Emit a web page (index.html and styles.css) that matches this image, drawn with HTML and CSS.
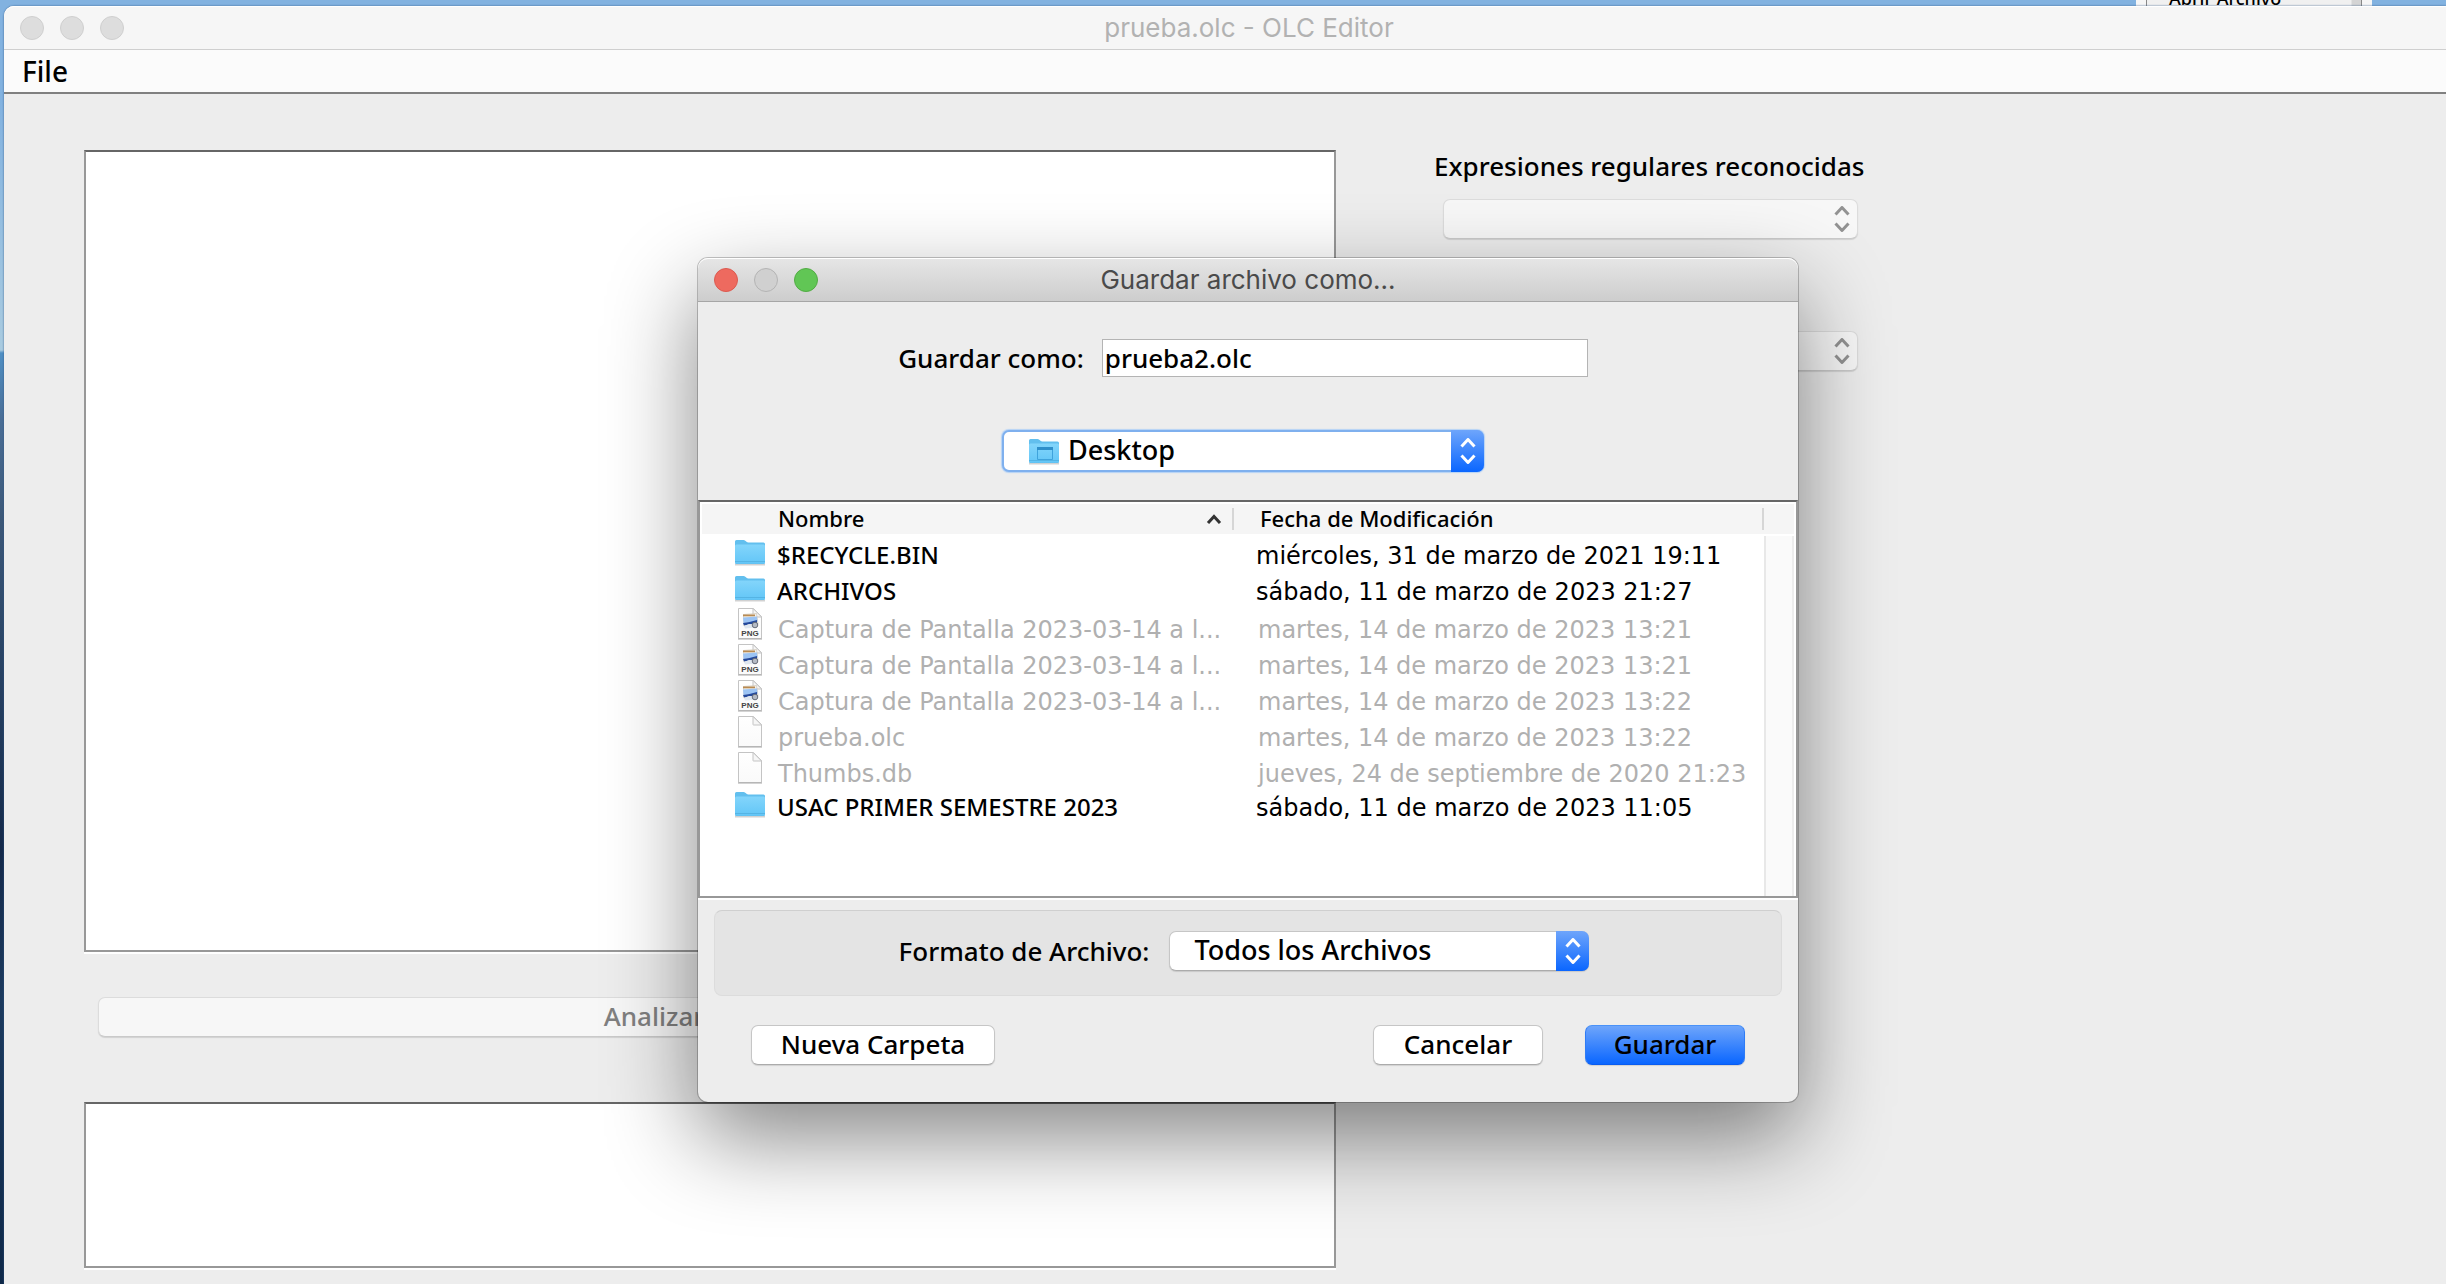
FILE: index.html
```
<!DOCTYPE html>
<html lang="es">
<head>
<meta charset="utf-8">
<title>prueba.olc - OLC Editor</title>
<link rel="stylesheet" href="styles.css">
</head>
<body>
<svg class="defs" aria-hidden="true">
  <defs>
    <linearGradient id="folder-fill" x1="0" y1="0" x2="0" y2="1">
      <stop offset="0" stop-color="#83d5fb"/>
      <stop offset="1" stop-color="#63c6f7"/>
    </linearGradient>
    <linearGradient id="page-fill" x1="0" y1="0" x2="0" y2="1">
      <stop offset="0" stop-color="#ffffff"/>
      <stop offset="1" stop-color="#fafafa"/>
    </linearGradient>
    <symbol id="folder" viewBox="0 0 32 36">
      <path d="M1 28.500h30" stroke="#000" stroke-opacity=".18" stroke-width="2"/>
      <path d="M1 5.500q0-1.500 1.500-1.500h7q1 0 1.800.8l1.200 1q.8.700 1.800.700H29.500q1.500 0 1.500 1.500V26.500q0 1.500-1.500 1.500h-27Q1 28 1 26.500z" fill="#62bfee"/>
      <path d="M1 10q0-1.500 1.500-1.500h27q1.500 0 1.500 1.500V26q0 1.500-1.500 1.500h-27Q1 27.500 1 26z" fill="url(#folder-fill)"/>
      <path d="M1 25.500h30" stroke="#55b4e4" stroke-width="1"/>
    </symbol>
    <symbol id="page" viewBox="0 0 32 36">
      <path d="M4.500.5H19.500L27.500 8.500V30.500H4.500z" fill="url(#page-fill)" stroke="#c4c4c4"/>
      <path d="M4 31h24" stroke="#a8a8a8" stroke-width="1"/>
      <path d="M19 .5V8.500q0 .5.500.5H27.500z" fill="#f6f6f6" stroke="#c4c4c4"/>
    </symbol>
    <symbol id="png" viewBox="0 0 32 36">
      <use href="#page" width="32" height="36"/>
      <path d="M9.500 6.500l13-1 1.500 10.500-14 2z" fill="#f3f1ec" stroke="#c9bfae" stroke-width=".6"/>
      <path d="M9 6.500h12v1.800H9z" fill="#b98b52"/>
      <path d="M9 9.500l14-1 .5 5-14 1.500z" fill="#9cc4f4"/>
      <path d="M9 15q6-.5 14-3v3L10 17.500z" fill="#24499c"/>
      <path d="M10 18l5-2 8 .5v3l-12 1z" fill="#dfe7f0"/>
      <circle cx="21" cy="17" r="2.800" fill="#b4bac4" stroke="#5c626e" stroke-width=".9"/>
      <text x="16" y="28" text-anchor="middle" class="png-tag">PNG</text>
    </symbol>
    <symbol id="stepper" viewBox="0 0 16 26">
      <path d="M1.500 8.500L8 1.500l6.500 7M1.500 17.500L8 24.500l6.500-7" fill="none" stroke="currentColor" stroke-width="3" stroke-linejoin="round"/>
    </symbol>
  </defs>
</svg>

<div class="popup-behind"><span class="popup-item">Abrir Archivo</span></div>

<main class="window">
  <header class="titlebar">
    <div class="lights"><span class="light"></span><span class="light"></span><span class="light"></span></div>
    <h1 class="title">prueba.olc - OLC Editor</h1>
  </header>
  <nav class="menubar"><button type="button" class="menu">File</button></nav>
  <div class="content">
    <section class="left">
      <textarea class="area editor" aria-label="Editor"></textarea>
      <button type="button" class="button analyze" disabled>Analizar</button>
      <textarea class="area console" aria-label="Consola"></textarea>
    </section>
    <aside class="right">
      <label class="label" for="expr">Expresiones regulares reconocidas</label>
      <div class="combo combo-off">
        <select id="expr" class="select" disabled><option></option></select>
        <span class="arrows"><svg class="stepper"><use href="#stepper"/></svg></span>
      </div>
      <div class="combo combo-off combo-second">
        <select class="select" aria-label="Resultado" disabled><option></option></select>
        <span class="arrows"><svg class="stepper"><use href="#stepper"/></svg></span>
      </div>
    </aside>
  </div>
</main>

<form class="dialog" role="dialog" aria-labelledby="dialog-title">
  <header class="titlebar dialog-bar">
    <div class="lights">
      <button type="button" class="light close" aria-label="Cerrar"></button>
      <span class="light idle"></span>
      <button type="button" class="light zoom" aria-label="Ampliar"></button>
    </div>
    <h2 class="title" id="dialog-title">Guardar archivo como...</h2>
  </header>

  <div class="target">
    <div class="save-row">
      <label class="label" for="name">Guardar como:</label>
      <input class="field" id="name" type="text" value="prueba2.olc">
    </div>
    <div class="combo place">
      <svg class="place-icon"><use href="#folder"/><path d="M9.500 12.500h15v12h-15z" fill="none" stroke="#3fa3dc"/><path d="M9 13.500h16" stroke="#2f8fca" stroke-width="3"/></svg>
      <select class="select" aria-label="Carpeta"><option>Desktop</option></select>
      <span class="arrows"><svg class="stepper"><use href="#stepper"/></svg></span>
    </div>
  </div>

  <div class="list">
    <table class="files">
      <colgroup><col class="col-name"><col class="col-date"><col></colgroup>
      <thead>
        <tr>
          <th><div class="head"><span>Nombre</span><svg class="sort" viewBox="0 0 16 10"><path d="M2 9l6-6.500L14 9" fill="none" stroke="#333" stroke-width="3"/></svg></div></th>
          <th><div class="head head-date">Fecha de Modificación</div></th>
          <th></th>
        </tr>
      </thead>
      <tbody>
        <tr><td><div class="name"><svg class="icon"><use href="#folder"/></svg>$RECYCLE.BIN</div></td><td class="date">miércoles, 31 de marzo de 2021 19:11</td><td class="track"></td></tr>
        <tr><td><div class="name"><svg class="icon"><use href="#folder"/></svg>ARCHIVOS</div></td><td class="date">sábado, 11 de marzo de 2023 21:27</td><td class="track"></td></tr>
        <tr class="off"><td><div class="name"><svg class="icon"><use href="#png"/></svg>Captura de Pantalla 2023-03-14 a l...</div></td><td class="date">martes, 14 de marzo de 2023 13:21</td><td class="track"></td></tr>
        <tr class="off"><td><div class="name"><svg class="icon"><use href="#png"/></svg>Captura de Pantalla 2023-03-14 a l...</div></td><td class="date">martes, 14 de marzo de 2023 13:21</td><td class="track"></td></tr>
        <tr class="off"><td><div class="name"><svg class="icon"><use href="#png"/></svg>Captura de Pantalla 2023-03-14 a l...</div></td><td class="date">martes, 14 de marzo de 2023 13:22</td><td class="track"></td></tr>
        <tr class="off"><td><div class="name"><svg class="icon"><use href="#page"/></svg>prueba.olc</div></td><td class="date">martes, 14 de marzo de 2023 13:22</td><td class="track"></td></tr>
        <tr class="off"><td><div class="name"><svg class="icon"><use href="#page"/></svg>Thumbs.db</div></td><td class="date">jueves, 24 de septiembre de 2020 21:23</td><td class="track"></td></tr>
        <tr><td><div class="name"><svg class="icon"><use href="#folder"/></svg>USAC PRIMER SEMESTRE 2023</div></td><td class="date">sábado, 11 de marzo de 2023 11:05</td><td class="track"></td></tr>
        <tr class="filler"><td></td><td></td><td class="track"></td></tr>
      </tbody>
    </table>
  </div>

  <div class="format">
    <label class="label" for="format">Formato de Archivo:</label>
    <div class="combo format-combo">
      <select class="select" id="format"><option>Todos los Archivos</option></select>
      <span class="arrows"><svg class="stepper"><use href="#stepper"/></svg></span>
    </div>
  </div>

  <footer class="actions">
    <button type="button" class="button new-folder">Nueva Carpeta</button>
    <button type="button" class="button cancel">Cancelar</button>
    <button type="submit" class="button primary">Guardar</button>
  </footer>
</form>
</body>
</html>
```
FILE: styles.css
```
* { box-sizing: border-box; }

body {
  margin: 0;
  min-height: 100vh;
  padding: 6px 0 0 4px;
  display: flex;
  position: relative;
  overflow: hidden;
  font: 500 26px/36px "Noto Sans", "Open Sans", sans-serif;
  color: #000;
  background: linear-gradient(#82b2e0 0, #82b2e0 100px, #a9cbe0 350px, #4f8fc4 353px, #4a6e96 420px, #3c5878 520px, #2a4566 650px, #14294a 850px, #1c3a5e 1000px, #0e2848 1284px);
}

button, input, select, textarea { font: inherit; color: inherit; margin: 0; }
.defs { position: absolute; width: 0; height: 0; }
.png-tag { font: bold 8px "Liberation Sans", sans-serif; fill: #444; }

.popup-behind {
  position: absolute;
  top: -20px;
  left: 2136px;
  width: 236px;
  height: 32px;
  padding: 0 10px;
  background: #f6f6f6;
}
.popup-item {
  display: block;
  padding: 4px 22px 0;
  border-left: 1px solid #888;
  border-right: 1px solid #888;
  background: linear-gradient(90deg, #f0f0f0 204px, #d4d4d4 205px);
  font-size: 18px;
  line-height: 28px;
}

/* Main window */
.window {
  flex: 1;
  position: relative;
  display: flex;
  flex-direction: column;
  border-top-left-radius: 10px;
  background: #ededed;
  box-shadow: 0 0 2px #345a86;
}
.titlebar {
  display: grid;
  grid-template-columns: 1fr auto 1fr;
  align-items: center;
  height: 44px;
  padding: 0 16px;
  border-bottom: 1px solid #cfcfcf;
  border-radius: 10px 0 0 0;
  background: #f6f6f6;
  box-shadow: inset 0 1px #fff;
}
.window .titlebar { padding: 0 0 0 48px; }
.window .lights { margin-left: -32px; }
.title {
  margin: 0;
  font: 26px/32px Inter, "Liberation Sans", sans-serif;
  color: #b2b2b2;
}
.lights { display: flex; gap: 16px; }
.light {
  width: 24px;
  height: 24px;
  padding: 0;
  border: 1px solid #cfcfcf;
  border-radius: 50%;
  background: #dddddd;
}
.menubar {
  height: 44px;
  padding-left: 18px;
  border-bottom: 2px solid #808080;
  background: #fbfbfb;
}
.menu { padding: 0; border: 0; background: none; line-height: 42px; font-size: 28px; }
.content {
  flex: 1;
  display: grid;
  grid-template-columns: minmax(0, 1252px) 434px;
  gap: 98px;
  padding: 56px 80px 16px;
}
.left { display: flex; flex-direction: column; }
.area {
  display: block;
  width: 100%;
  border: 2px solid #989898;
  border-top-color: #666;
  background: #fff;
  box-shadow: 0 2px #fff;
  resize: none;
  outline: none;
}
.editor { flex: 1; min-height: 300px; }
.console { height: 166px; }

.button {
  height: 40px;
  padding: 0;
  border: 1px solid #c6c6c6;
  border-bottom-color: #ababab;
  border-radius: 7px;
  background: #fff;
  box-shadow: 0 1px 1px rgba(0, 0, 0, .12);
  line-height: 34px;
  padding-bottom: 2px;
  text-align: center;
}
.analyze {
  margin: 45px 126px 65px 14px;
  border-color: #dcdcdc;
  border-bottom-color: #cacaca;
  background: #f7f7f7;
  color: #808080;
}
.right { display: flex; flex-direction: column; }
.right .label { line-height: 32px; white-space: nowrap; }

.combo {
  position: relative;
  display: flex;
  height: 40px;
  border: 1px solid #c6c6c6;
  border-bottom-color: #ababab;
  border-radius: 7px;
  background: #fff;
  box-shadow: 0 1px 1px rgba(0, 0, 0, .12);
}
.select {
  flex: 1;
  appearance: none;
  padding: 0 40px 2px 24px;
  border: 0;
  background: none;
  outline: none;
  font-size: 27px;
  line-height: 34px;
}
.arrows {
  position: absolute;
  top: -1px;
  right: -1px;
  bottom: -1px;
  width: 33px;
  display: grid;
  place-items: center;
  border-radius: 0 7px 7px 0;
  background: linear-gradient(#6ea5fb, #0a66ff);
  color: #fff;
  pointer-events: none;
}
.stepper { width: 16px; height: 26px; }
.combo-off {
  margin: 17px 10px 0 9px;
  border-color: #dcdcdc;
  border-bottom-color: #cacaca;
  background: #f7f7f7;
}
.combo-off .arrows { background: none; color: #929292; }
.combo-second { margin-top: 92px; }

/* Save dialog, floating over the main window */
.dialog {
  position: absolute;
  top: 258px;
  left: 698px;
  width: 1100px;
  border-radius: 10px;
  background: #ededed;
  box-shadow: 0 0 0 1px rgba(0, 0, 0, .22), 0 36px 90px rgba(0, 0, 0, .48);
}
.dialog-bar {
  border-bottom-color: #a6a6a6;
  border-radius: 10px 10px 0 0;
  background: linear-gradient(#e6e6e6, #cdcdcd);
}
.dialog-bar .title { color: #4a4a4a; }
.close { border-color: #dc5a50; background: #ee6a5f; }
.idle { border-color: #b4b4b4; background: #d0d0d0; }
.zoom { border-color: #52ac44; background: #61c655; }

.target {
  display: flex;
  flex-direction: column;
  align-items: center;
  gap: 53px;
  padding: 37px 10px 28px 0;
}
.save-row { display: flex; align-items: center; gap: 18px; }
.field {
  width: 486px;
  height: 38px;
  padding: 0 2px;
  border: 1px solid #b4b4b4;
  background: #fff;
  outline: none;
}
.place {
  width: 482px;
  height: 42px;
  border: 2px solid #7fb0ee;
  box-shadow: 0 0 1px 1px #b4d2f6;
}
.place .select { padding-left: 64px; }
.place .arrows { top: -2px; right: -2px; bottom: -2px; }
.place-icon {
  position: absolute;
  top: 3px;
  left: 24px;
  width: 32px;
  height: 36px;
}

.list {
  display: flex;
  min-height: 398px;
  padding: 2px 2px 0;
  border: 2px solid #989898;
  border-top-color: #666;
  background: #fff;
  box-shadow: 0 2px #fff;
}
.files { width: 100%; table-layout: fixed; border-collapse: separate; border-spacing: 0; font-size: 24px; }
.col-name { width: 532px; }
.col-date { width: 530px; }
.files th { height: 32px; padding: 0; border-bottom: 2px solid #fff; background: #f5f5f5; font-weight: 500; text-align: left; }
.head {
  display: flex;
  align-items: center;
  justify-content: space-between;
  height: 22px;
  padding: 0 10px 0 76px;
  border-right: 2px solid #d6d6d6;
  font-size: 22px;
  line-height: 20px;
}
.head span, .head-date { padding-bottom: 3px; }
.head-date { padding-left: 26px; }
.sort { width: 16px; height: 10px; }
.files td { height: 36px; padding: 0; vertical-align: top; white-space: nowrap; }
.files .name { display: flex; gap: 11px; height: 36px; padding-left: 32px; line-height: 38px; }
.files .date { padding: 4px 0 0 22px; font-family: "DejaVu Sans", sans-serif; line-height: 32px; }
.icon { width: 32px; height: 36px; flex: none; }
.off { color: #b0b0b0; }
.files .off .name { gap: 12px; font-family: "DejaVu Sans", sans-serif; line-height: 44px; }
.files .off .date { padding: 8px 0 0 24px; line-height: 28px; }
.files .track { border-left: 2px solid #e8e8e8; border-right: 2px solid #ededed; background: #fafafa; }
.files .filler td { height: auto; }

.format {
  display: flex;
  align-items: center;
  justify-content: center;
  gap: 20px;
  height: 86px;
  margin: 12px 16px 29px;
  padding: 0 8px 4px 0;
  border: 1px solid #dcdcdc;
  border-top-color: #cfcfcf;
  border-radius: 8px;
  background: #e4e4e4;
}
.format-combo { width: 420px; }
.actions { display: flex; padding: 0 53px 37px; }
.new-folder { width: 244px; margin-right: auto; }
.cancel { width: 170px; margin-right: 42px; }
.primary {
  width: 160px;
  border-color: #4a92f8 #2f7cf6 #0a5cf0;
  background: linear-gradient(#6ea5fb, #0a66ff);
}
```
